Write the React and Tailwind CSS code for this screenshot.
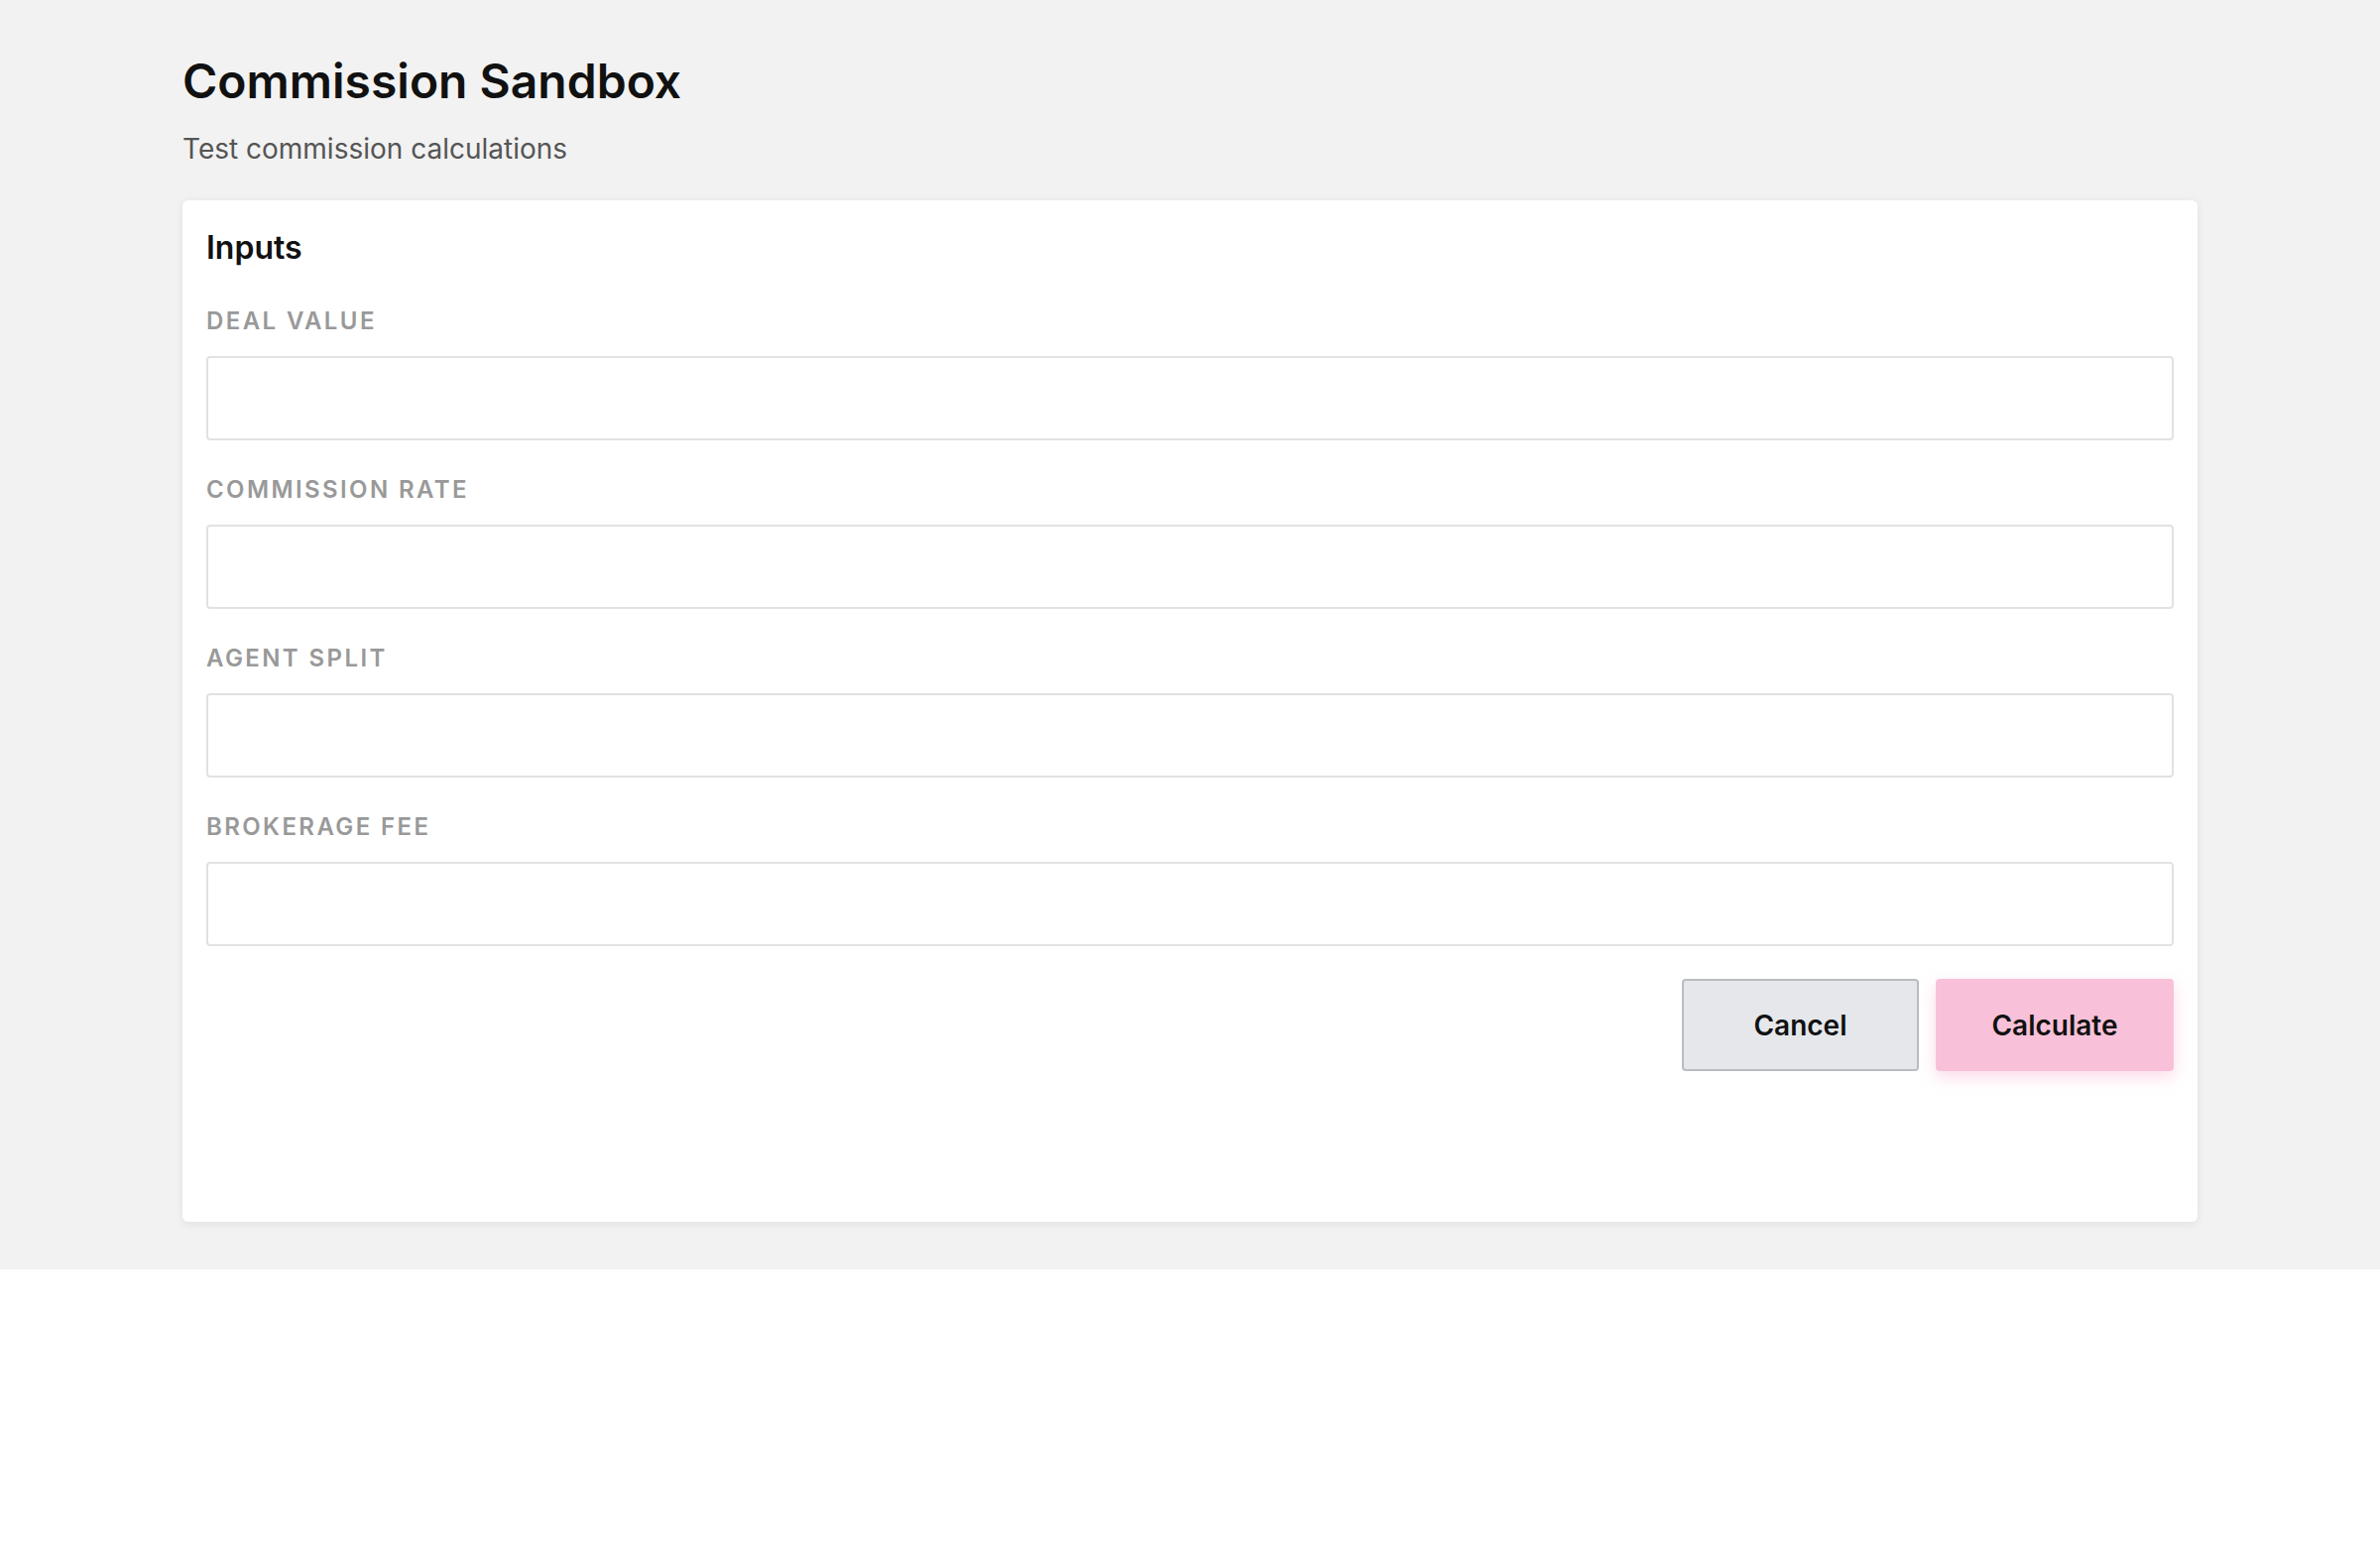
const fields = ["Deal Value", "Commission Rate", "Agent Split", "Brokerage Fee"];

export default function App() {
  return (
    <div
      className="bg-[#f2f2f2] px-[184px] pt-[52px] pb-[48px]"
      style={{ fontFamily: "Inter, 'Noto Sans', sans-serif" }}
    >
      <h1 className="text-[48px] leading-[60px] font-semibold text-[#111111]">
        Commission Sandbox
      </h1>
      <p className="mt-[18px] text-[28px] leading-[40px] text-[#555555]">
        Test commission calculations
      </p>

      <div className="mt-[32px] rounded-md bg-white p-[24px] pb-[152px] shadow-[0_2px_10px_rgba(0,0,0,0.08)]">
        <h2 className="text-[32px] leading-[48px] font-semibold text-[#111111]">Inputs</h2>

        <div className="mt-[34px] flex flex-col gap-[34px]">
          {fields.map((label) => (
            <div key={label} className="flex flex-col">
              <label className="text-[24px] leading-[32px] font-semibold uppercase tracking-[0.1em] text-[#999999]">
                {label}
              </label>
              <input
                type="text"
                className="mt-[19px] h-[85px] w-full rounded-[4px] border-2 border-[#e2e2e2] bg-white px-4 text-[28px] outline-none"
              />
            </div>
          ))}
        </div>

        <div className="mt-[33px] flex justify-end gap-[17px]">
          <button className="h-[93px] w-[239px] rounded-[4px] border-2 border-[#b9bcc1] bg-[#e5e7eb] text-[28px] font-semibold text-[#111111]">
            Cancel
          </button>
          <button className="h-[93px] w-[240px] rounded-[4px] bg-[#f8c1d9] text-[28px] font-semibold text-[#111111] shadow-[0_6px_16px_rgba(248,193,217,0.6)]">
            Calculate
          </button>
        </div>
      </div>
    </div>
  );
}
